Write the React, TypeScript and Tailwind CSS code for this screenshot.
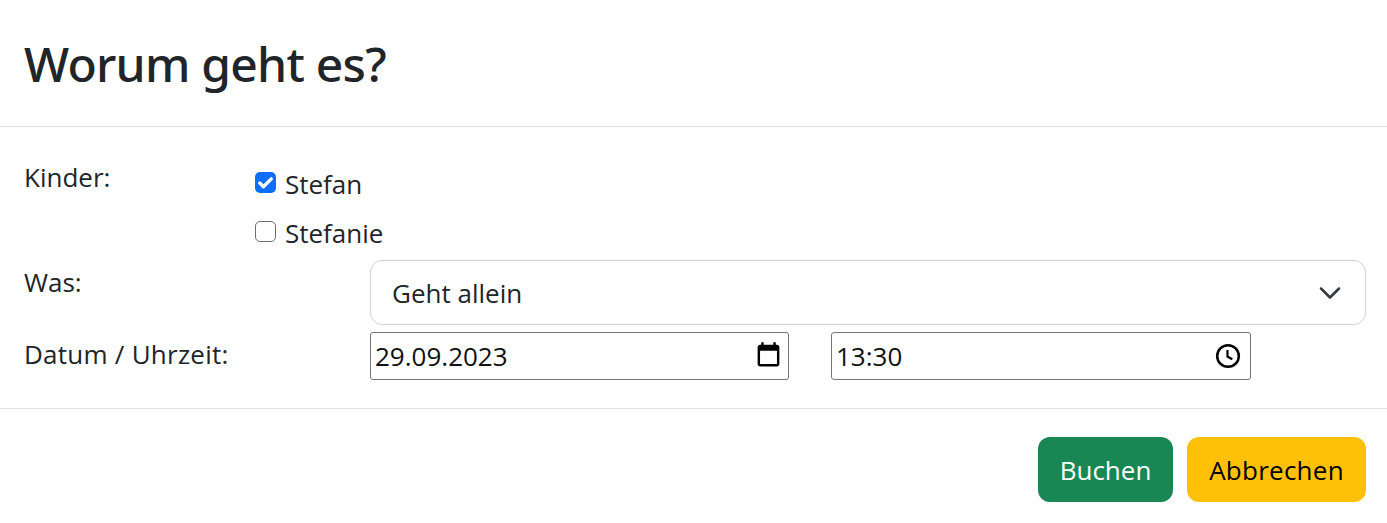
import React from 'react'

const FONT = "font-['Open_Sans','Noto_Sans',sans-serif]"

const CheckRow = ({ label, checked, className }: { label: string; checked?: boolean; className: string }) => (
  <div className={`flex items-center h-[36px] ${className}`}>
    {checked ? (
      <span className="w-[21px] h-[21px] rounded-[5px] bg-[#0d6efd] flex items-center justify-center mt-[-4px]">
        <svg width="21" height="21" viewBox="0 0 20 20" fill="none">
          <path d="M4.500 10.500l3.500 3.500 7.500-7.500" stroke="#fff" strokeWidth="3.200" strokeLinecap="round" strokeLinejoin="round" />
        </svg>
      </span>
    ) : (
      <span className="w-[21px] h-[21px] rounded-[5px] border-[1.5px] border-[#6e6e6e] bg-white mt-[-4px]" />
    )}
    <span className="ml-[9px]">{label}</span>
  </div>
)

const PickerField = ({ value, width, children }: { value: string; width: string; children: React.ReactNode }) => (
  <div className={`h-[48px] ${width} flex items-center justify-between pl-[4px] pr-[5px] border border-[#767676] rounded-[3px] bg-white text-[#101010]`}>
    <span>{value}</span>
    {children}
  </div>
)

export default function App() {
  return (
    <div className={`${FONT} w-[1387px] h-[523px] bg-white text-[#212529] text-[26px] leading-[36px] overflow-hidden`}>
      {/* ヘッダー */}
      <div className="h-[127px] border-b border-[#dee2e6] px-6 flex items-center">
        <h1 className="font-['Noto_Sans',sans-serif] text-[48px] font-medium leading-[56px] tracking-[-0.76px] mt-[2px]">Worum geht es?</h1>
      </div>

      {/* 本文 */}
      <div className="h-[282px] pl-6 pr-[21px] pt-[33px] border-b border-[#dee2e6] flex flex-col">
        <div className="flex h-[101px]">
          <div className="w-[231px] shrink-0 mt-[-1px]">Kinder:</div>
          <div className="flex flex-col mt-[6px]">
            <CheckRow label="Stefan" checked className="mb-[13px]" />
            <CheckRow label="Stefanie" className="" />
          </div>
        </div>
        <div className="flex mt-[-1px]">
          <div className="w-[346px] shrink-0 mt-[4px]">Was:</div>
          <div className="w-[996px] shrink-0 h-[65px] border border-[#ced4da] rounded-[12px] pl-[21px] pr-[23px] flex items-center justify-between">
            <span>Geht allein</span>
            <svg width="24" height="24" viewBox="0 0 16 16" fill="none">
              <path d="M2 5l6 6 6-6" stroke="#343a40" strokeWidth="1.700" strokeLinecap="round" strokeLinejoin="round" />
            </svg>
          </div>
        </div>
        <div className="flex mt-[7px]">
          <div className="w-[346px] shrink-0 mt-[4px] tracking-[0.25px]">Datum / Uhrzeit:</div>
          <div className="flex gap-[42px]">
            <PickerField value="29.09.2023" width="w-[419px]">
              <svg className="mt-[-2px]" width="29" height="29" viewBox="0 0 24 24" fill="#000">
                <path d="M19 3h-1V1h-2v2H8V1H6v2H5c-1.100 0-2 .9-2 2v14c0 1.100.9 2 2 2h14c1.100 0 2-.9 2-2V5c0-1.100-.9-2-2-2zm0 16H5V8h14v11z" />
              </svg>
            </PickerField>
            <PickerField value="13:30" width="w-[420px]">
              <svg className="mr-[4px]" width="26" height="26" viewBox="0 0 24 24" fill="none" stroke="#000" strokeWidth="2.300">
                <circle cx="12" cy="12" r="10" />
                <path d="M11.500 6.500V12.500l4.500 2.500" strokeWidth="2" />
              </svg>
            </PickerField>
          </div>
        </div>
      </div>

      {/* フッター */}
      <div className="flex justify-end gap-[14px] pr-[21px] pt-[28px]">
        <button className="h-[65px] w-[135px] rounded-[12px] bg-[#198754] text-white">Buchen</button>
        <button className="h-[65px] w-[179px] rounded-[12px] bg-[#ffc107] text-black tracking-[0.25px]">Abbrechen</button>
      </div>
    </div>
  )
}
